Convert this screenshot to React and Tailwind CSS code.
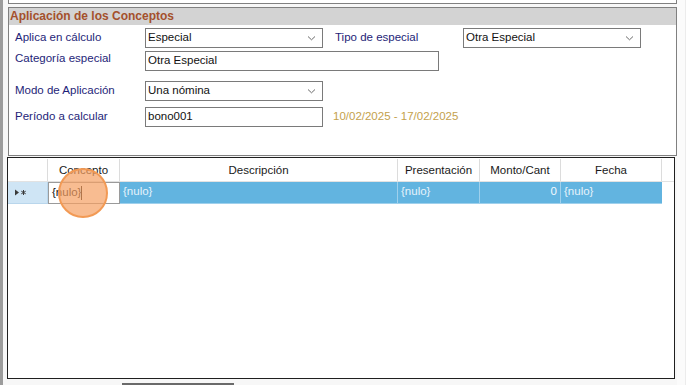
function Chevron() {
  return (
    <svg width="9" height="6" viewBox="0 0 9 6" fill="none" stroke="#6b6b6b" strokeWidth="1">
      <path d="M1 1.5 L4.5 4.8 L8 1.5" />
    </svg>
  );
}

function Combo({ value, width }) {
  return (
    <div
      className={`flex items-center justify-between h-[20px] border border-[#7a7a7a] bg-white pl-[2px] pr-[6px] ${width}`}
    >
      <span className="text-[11.5px] text-[#111]">{value}</span>
      <Chevron />
    </div>
  );
}

function TextBox({ value, width }) {
  return (
    <div className={`flex items-center h-[20px] border border-[#7a7a7a] bg-white pl-[2px] ${width}`}>
      <span className="text-[11.5px] text-[#111]">{value}</span>
    </div>
  );
}

function Label({ children, className = "" }) {
  return <div className={`text-[11.5px] text-[#1e1e78] ${className}`}>{children}</div>;
}

const columns = [
  { name: "Concepto", w: "w-[72px]" },
  { name: "Descripción", w: "w-[278px]" },
  { name: "Presentación", w: "w-[82px]" },
  { name: "Monto/Cant", w: "w-[81px]" },
  { name: "Fecha", w: "w-[101px]" },
];

export default function App() {
  return (
    <div
      className="relative flex w-[688px] h-[385px] overflow-hidden bg-[#fbfbfb]"
      style={{ fontFamily: '"Liberation Sans", Arial, sans-serif' }}
    >
      {/* window edge */}
      <div className="w-[3px] h-full bg-[#9c9c9c]" />

      <div className="flex flex-col pl-[4px] bg-[#f7f7f7]">
        {/* top panel (cut off) */}
        <div className="ml-[1px] w-[669px] h-[4px] border-x border-b border-[#808080] bg-white" />

        {/* group box */}
        <div className="mt-[3px] ml-[1px] w-[669px] h-[149px] border border-[#808080] bg-white flex flex-col">
          <div className="h-[17px] bg-[#d3d3d3] flex items-center pl-[1px]">
            <span className="text-[12px] font-bold text-[#a4502c]">Aplicación de los Conceptos</span>
          </div>

          <div className="flex flex-col pl-[6px] pt-[3px]">
            <div className="flex items-center">
              <Label className="w-[130px]">Aplica en cálculo</Label>
              <Combo value="Especial" width="w-[178px]" />
              <Label className="ml-[12px] w-[128px]">Tipo de especial</Label>
              <Combo value="Otra Especial" width="w-[178px]" />
            </div>

            <div className="flex items-start mt-[3px]">
              <Label className="w-[130px] mt-[-1px]">Categoría especial</Label>
              <TextBox value="Otra Especial" width="w-[294px]" />
            </div>

            <div className="flex items-center mt-[10px]">
              <Label className="w-[130px]">Modo de Aplicación</Label>
              <Combo value="Una nómina" width="w-[178px]" />
            </div>

            <div className="flex items-center mt-[6px]">
              <Label className="w-[130px]">Período a calcular</Label>
              <TextBox value="bono001" width="w-[178px]" />
              <span className="ml-[10px] text-[11.5px] text-[#c4a14c]">10/02/2025 - 17/02/2025</span>
            </div>
          </div>
        </div>

        {/* grid */}
        <div className="mt-[1px] w-[668px] h-[223px] border border-[#1f1f1f] bg-white pt-[1px]">
          <div className="flex h-[23px] border-b border-[#e2e2e2]">
            <div className="w-[40px] border-r border-[#dcdcdc]" />
            {columns.map((c) => (
              <div
                key={c.name}
                className={`${c.w} flex items-center justify-center pt-[2px] border-r border-[#dcdcdc] text-[11.5px] text-[#1a1a1a]`}
              >
                {c.name}
              </div>
            ))}
          </div>

          <div className="flex h-[22px]">
            <div className="w-[40px] bg-[#cfe5f5] border-r border-b border-[#b9d6ec] flex items-center pl-[7px]">
              <svg width="12" height="7" viewBox="0 0 12 7">
                <path d="M0 0.5 L4 3.5 L0 6.5 Z" fill="#3a3a3a" />
                <path d="M8.5 1 V6 M6.3 2.2 L10.7 4.8 M6.3 4.8 L10.7 2.2" stroke="#3a3a3a" strokeWidth="1" />
              </svg>
            </div>
            <div className="w-[72px] bg-white border border-[#9a9a9a] flex items-center pl-[3px]">
              <span className="text-[11.5px] text-[#111]">{"{nulo}"}</span>
              <span className="w-[1px] h-[14px] bg-[#111]" />
            </div>
            <div className="w-[278px] bg-[#62b4e0] border-r border-b border-[#9fd0ec] flex items-center pl-[3px] text-[11.5px] text-[#e6f3fb]">
              {"{nulo}"}
            </div>
            <div className="w-[82px] bg-[#62b4e0] border-r border-b border-[#9fd0ec] flex items-center pl-[3px] text-[11.5px] text-[#e6f3fb]">
              {"{nulo}"}
            </div>
            <div className="w-[81px] bg-[#62b4e0] border-r border-b border-[#9fd0ec] flex items-center justify-end pr-[3px] text-[11.5px] text-[#f4faff]">
              0
            </div>
            <div className="w-[101px] bg-[#62b4e0] border-b border-[#9fd0ec] flex items-center pl-[3px] text-[11.5px] text-[#e6f3fb]">
              {"{nulo}"}
            </div>
          </div>
        </div>

        {/* bottom strip (cut off) */}
        <div className="flex items-end h-[6px]">
          <div className="ml-[115px] w-[112px] h-[2px] bg-[#6a6a6a]" />
        </div>
      </div>

      {/* right margin */}
      <div className="flex-1 bg-white border-l border-[#ececec] ml-[8px]" />

      {/* click highlight */}
      <div className="absolute left-[58px] top-[168px] w-[50px] h-[50px] rounded-full bg-[#f5a063]/70 border-2 border-[#f29a55]" />
    </div>
  );
}
